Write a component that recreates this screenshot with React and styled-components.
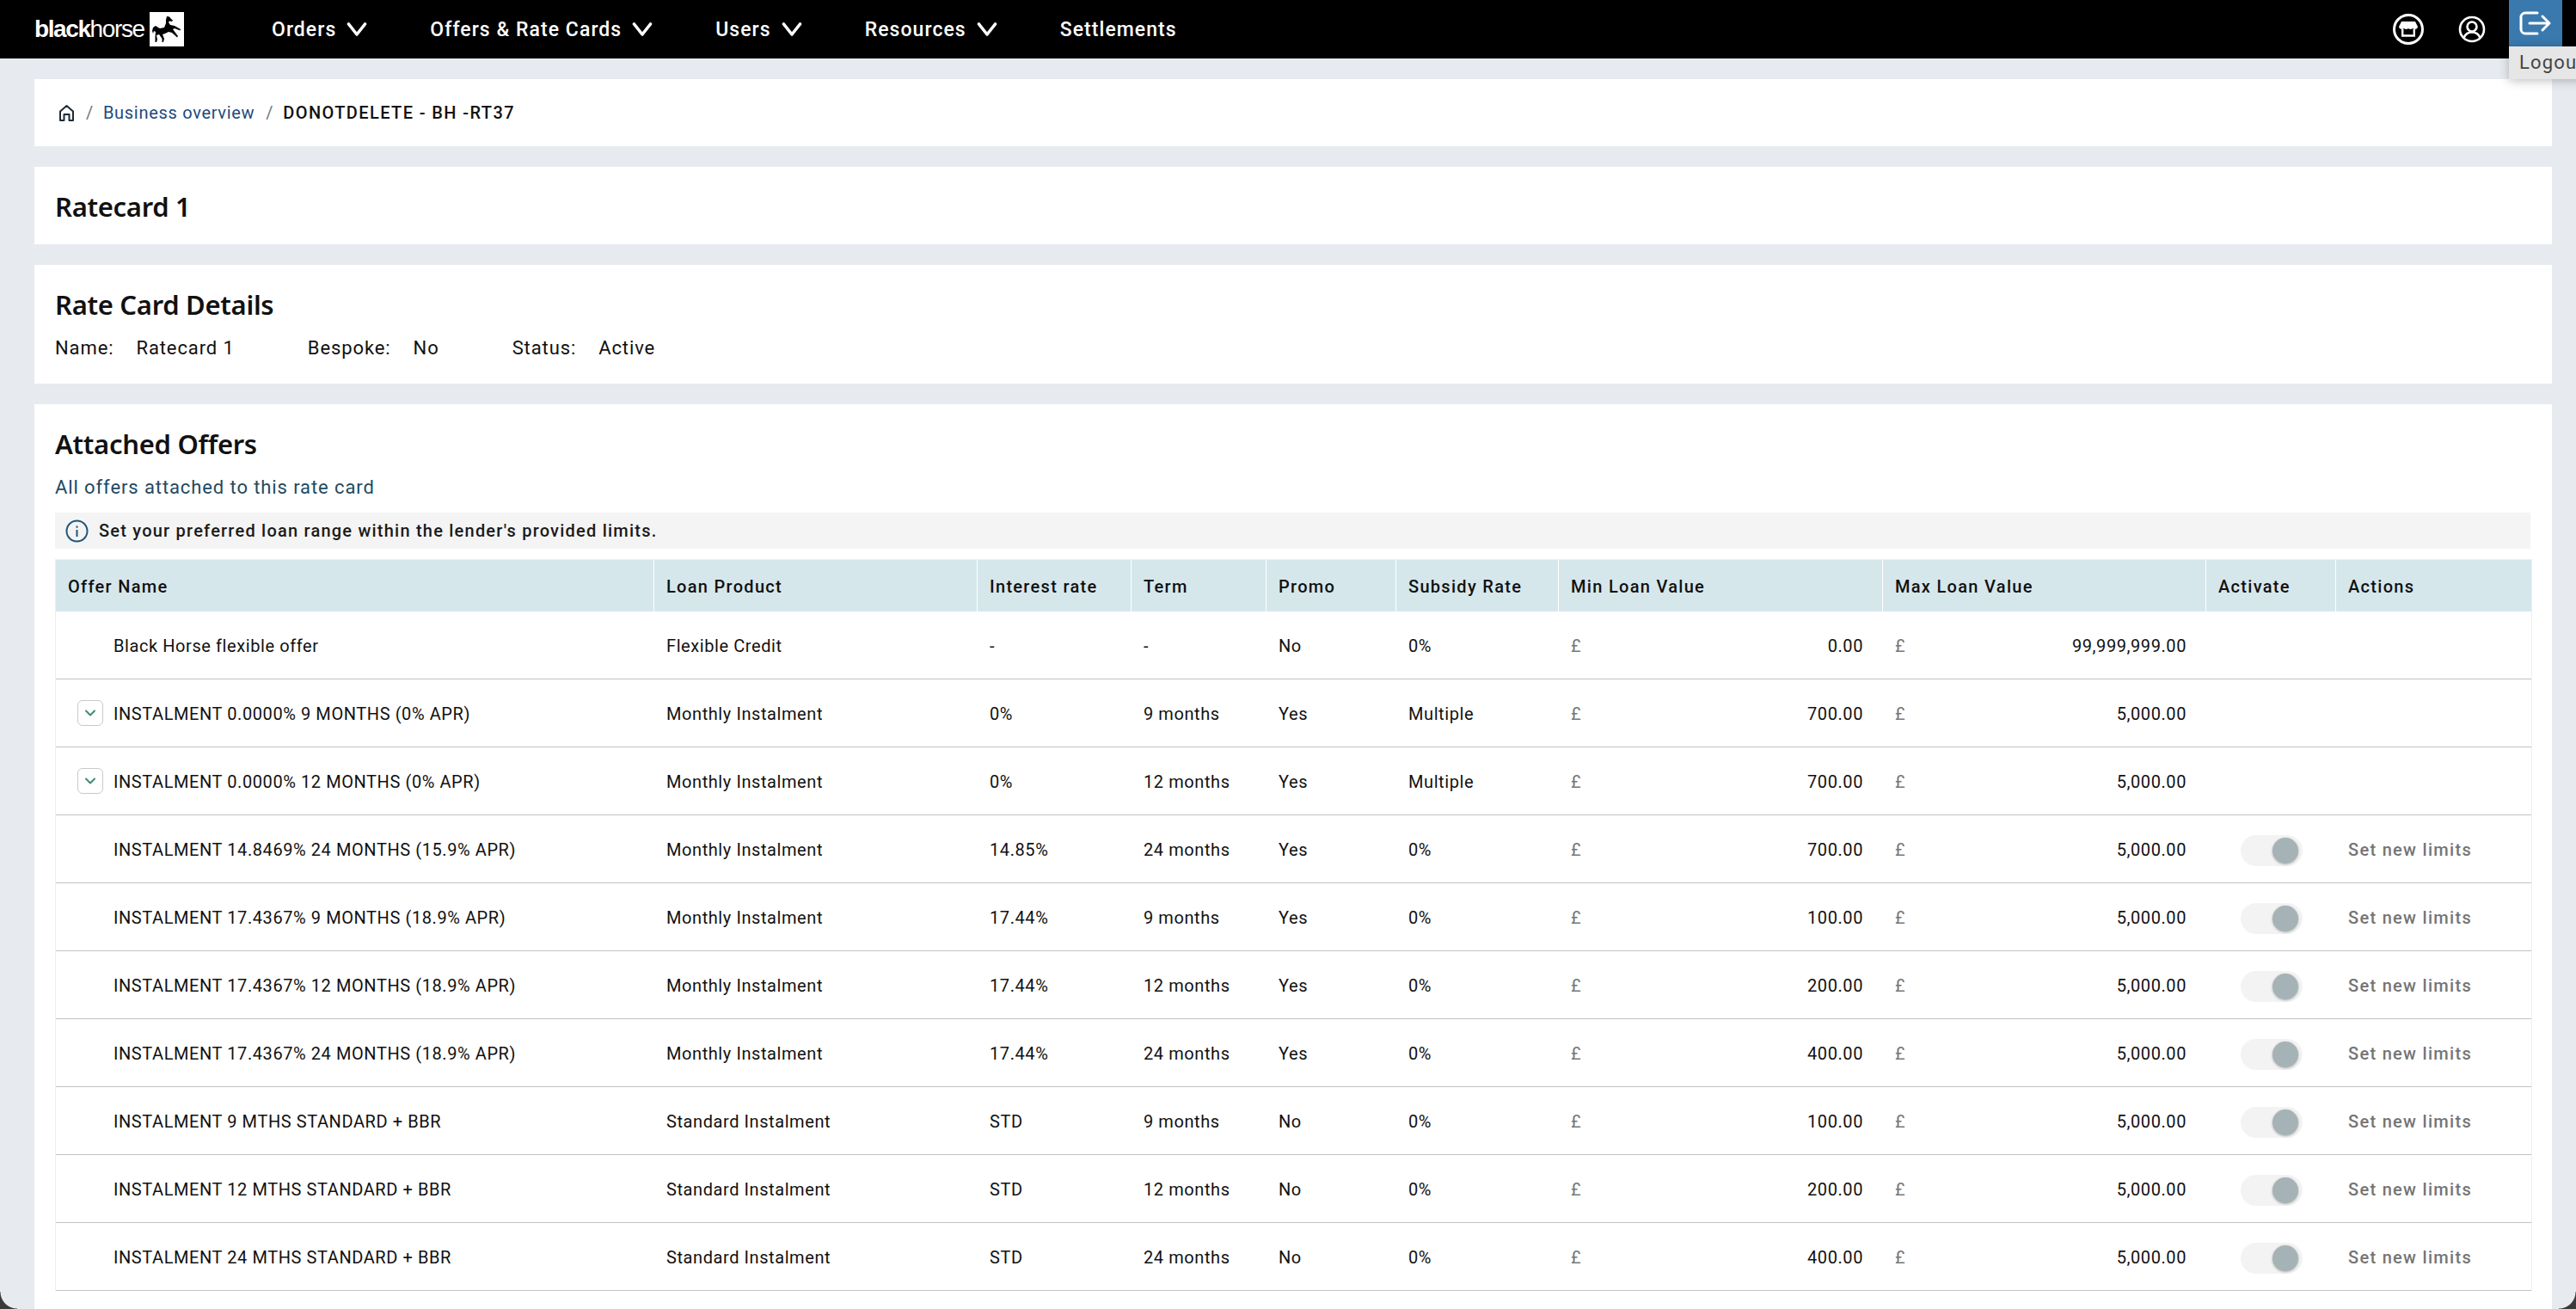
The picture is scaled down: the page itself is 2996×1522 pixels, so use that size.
import React from "react";
import styled, { createGlobalStyle } from "styled-components";

const GlobalStyle = createGlobalStyle`
  html, body {
    margin: 0;
    height: 100%;
    overflow: hidden;
    background: #e7eaef;
    font-family: Roboto, "Liberation Sans", sans-serif;
    color: #111;
  }
  * { box-sizing: border-box; }
`;

const offers = [
  { name: "Black Horse flexible offer", product: "Flexible Credit", rate: "-", term: "-", promo: "No", subsidy: "0%", min: "0.00", max: "99,999,999.00" },
  { name: "INSTALMENT 0.0000% 9 MONTHS (0% APR)", product: "Monthly Instalment", rate: "0%", term: "9 months", promo: "Yes", subsidy: "Multiple", min: "700.00", max: "5,000.00", expand: true },
  { name: "INSTALMENT 0.0000% 12 MONTHS (0% APR)", product: "Monthly Instalment", rate: "0%", term: "12 months", promo: "Yes", subsidy: "Multiple", min: "700.00", max: "5,000.00", expand: true },
  { name: "INSTALMENT 14.8469% 24 MONTHS (15.9% APR)", product: "Monthly Instalment", rate: "14.85%", term: "24 months", promo: "Yes", subsidy: "0%", min: "700.00", max: "5,000.00", actions: true },
  { name: "INSTALMENT 17.4367% 9 MONTHS (18.9% APR)", product: "Monthly Instalment", rate: "17.44%", term: "9 months", promo: "Yes", subsidy: "0%", min: "100.00", max: "5,000.00", actions: true },
  { name: "INSTALMENT 17.4367% 12 MONTHS (18.9% APR)", product: "Monthly Instalment", rate: "17.44%", term: "12 months", promo: "Yes", subsidy: "0%", min: "200.00", max: "5,000.00", actions: true },
  { name: "INSTALMENT 17.4367% 24 MONTHS (18.9% APR)", product: "Monthly Instalment", rate: "17.44%", term: "24 months", promo: "Yes", subsidy: "0%", min: "400.00", max: "5,000.00", actions: true },
  { name: "INSTALMENT 9 MTHS STANDARD + BBR", product: "Standard Instalment", rate: "STD", term: "9 months", promo: "No", subsidy: "0%", min: "100.00", max: "5,000.00", actions: true },
  { name: "INSTALMENT 12 MTHS STANDARD + BBR", product: "Standard Instalment", rate: "STD", term: "12 months", promo: "No", subsidy: "0%", min: "200.00", max: "5,000.00", actions: true },
  { name: "INSTALMENT 24 MTHS STANDARD + BBR", product: "Standard Instalment", rate: "STD", term: "24 months", promo: "No", subsidy: "0%", min: "400.00", max: "5,000.00", actions: true },
];

const columns = [
  ["Offer Name", 696],
  ["Loan Product", 376],
  ["Interest rate", 179],
  ["Term", 157],
  ["Promo", 151],
  ["Subsidy Rate", 189],
  ["Min Loan Value", 377],
  ["Max Loan Value", 376],
  ["Activate", 151],
  ["Actions", 227],
];

const Chevron = () => (
  <svg width="24" height="18" viewBox="0 0 24 18" fill="none" stroke="#fff" strokeWidth="3.6" strokeLinecap="round" strokeLinejoin="round">
    <path d="M2.500 3L12 15l9.500-12" />
  </svg>
);

const HorseLogo = () => (
  <LogoBox>
    <svg width="40" height="40" viewBox="0 0 40 40">
      <path
        fill="#000"
        d="M20 5L23 5.500L25 8L27 9.500L26 11L23 10.500L22 12L24 15L29 16L36 20L35.500 21.500L29 19L27 20L33 28L32 29.500L26 24L22 23L18 25L15 26L17 31L16 35L14.500 35L14.500 31L11 26L8 27L9 32L8 35L6.500 35L6.500 29L7 23L5 22L4 25L3 22L4 18L7 16L10 18L12 19L17 18L19 13L19 9Z"
      />
    </svg>
  </LogoBox>
);

const ShopIcon = () => (
  <svg width="38" height="38" viewBox="0 0 38 38">
    <circle cx="19" cy="19" r="16.5" fill="none" stroke="#fff" strokeWidth="3" />
    <path fill="#fff" d="M11 10h16l3 6c0 2-2 3-3.5 3s-2.500-1-2.500-1-1 1-2.500 1-2.500-1-2.500-1-1 1-2.500 1-2.500-1-2.500-1-1 1-2.500 1S8 18 8 16z" />
    <path fill="none" stroke="#fff" strokeWidth="2.4" d="M12.200 19v7.500h13.600V19" />
  </svg>
);

const UserIcon = () => (
  <svg width="32" height="32" viewBox="0 0 32 32" fill="none" stroke="#fff" strokeWidth="2.6">
    <circle cx="16" cy="16" r="14" />
    <circle cx="16" cy="13" r="5.500" />
    <path d="M6.500 26c1.500-4 5-6.500 9.500-6.500s8 2.500 9.500 6.500" />
  </svg>
);

const LogoutIcon = () => (
  <svg width="38" height="28" viewBox="0 0 38 28" fill="none" stroke="#fff" strokeWidth="3" strokeLinecap="round" strokeLinejoin="round">
    <path d="M21 2H7a5 5 0 0 0-5 5v14a5 5 0 0 0 5 5h14" />
    <path d="M12 14h23M27 6l8 8-8 8" />
  </svg>
);

const HomeIcon = () => (
  <svg width="19" height="21" viewBox="0 0 19 21" fill="none" stroke="#1d2b36" strokeWidth="2" strokeLinejoin="round">
    <path d="M2 8.500L9.500 2 17 8.500V19h-4.500v-7h-6v7H2z" />
  </svg>
);

const InfoIcon = () => (
  <svg width="27" height="27" viewBox="0 0 27 27" fill="none" stroke="#1f5578" strokeWidth="2">
    <circle cx="13.500" cy="13.500" r="12" />
    <path d="M13.500 12v8" />
    <path d="M13.500 7.500v2.200" />
  </svg>
);

const SmallChevron = () => (
  <svg width="14" height="10" viewBox="0 0 14 10" fill="none" stroke="#3f8a78" strokeWidth="2" strokeLinecap="round" strokeLinejoin="round">
    <path d="M2 2.500l5 5 5-5" />
  </svg>
);

function NavItem({ label, menu }) {
  return (
    <NavLink>
      {label}
      {menu && <Chevron />}
    </NavLink>
  );
}

function Money({ value }) {
  return (
    <MoneyCell>
      <Pound>£</Pound>
      <span>{value}</span>
    </MoneyCell>
  );
}

function App() {
  return (
    <Page>
      <GlobalStyle />
      <TopBar>
        <Logo>
          <LogoText><b>black</b>horse</LogoText>
          <HorseLogo />
        </Logo>
        <Nav>
          <NavItem label="Orders" menu />
          <NavItem label="Offers & Rate Cards" menu />
          <NavItem label="Users" menu />
          <NavItem label="Resources" menu />
          <NavItem label="Settlements" />
        </Nav>
        <TopIcons>
          <ShopIcon />
          <UserIcon />
          <LogoutTab>
            <LogoutIcon />
            <Tooltip>Logout</Tooltip>
          </LogoutTab>
        </TopIcons>
      </TopBar>

      <Content>
        <BreadcrumbCard>
          <HomeIcon />
          <Slash>/</Slash>
          <CrumbLink>Business overview</CrumbLink>
          <Slash>/</Slash>
          <CrumbCurrent>DONOTDELETE - BH -RT37</CrumbCurrent>
        </BreadcrumbCard>

        <TitleCard>
          <Heading>Ratecard 1</Heading>
        </TitleCard>

        <DetailsCard>
          <Heading>Rate Card Details</Heading>
          <DetailRow>
            <Detail><span>Name:</span><span>Ratecard 1</span></Detail>
            <Detail><span>Bespoke:</span><span>No</span></Detail>
            <Detail><span>Status:</span><span>Active</span></Detail>
          </DetailRow>
        </DetailsCard>

        <OffersCard>
          <Heading>Attached Offers</Heading>
          <SubHeading>All offers attached to this rate card</SubHeading>
          <InfoBar>
            <InfoIcon />
            Set your preferred loan range within the lender's provided limits.
          </InfoBar>
          <Table>
            <colgroup>
              {columns.map(([label, width]) => (
                <col key={label} width={width} />
              ))}
            </colgroup>
            <thead>
              <tr>
                {columns.map(([label]) => (
                  <Th key={label}>{label}</Th>
                ))}
              </tr>
            </thead>
            <tbody>
              {offers.map((offer) => (
                <tr key={offer.name}>
                  <Td>
                    <NameCell>
                      {offer.expand && (
                        <ExpandButton>
                          <SmallChevron />
                        </ExpandButton>
                      )}
                      {offer.name}
                    </NameCell>
                  </Td>
                  <Td>{offer.product}</Td>
                  <Td>{offer.rate}</Td>
                  <Td>{offer.term}</Td>
                  <Td>{offer.promo}</Td>
                  <Td>{offer.subsidy}</Td>
                  <Td><Money value={offer.min} /></Td>
                  <Td><Money value={offer.max} /></Td>
                  <Td>
                    {offer.actions && (
                      <Toggle>
                        <Thumb />
                      </Toggle>
                    )}
                  </Td>
                  <Td>{offer.actions && <LimitsLink>Set new limits</LimitsLink>}</Td>
                </tr>
              ))}
            </tbody>
          </Table>
        </OffersCard>
      </Content>
      <CornerLeft />
      <CornerRight />
    </Page>
  );
}

const Page = styled.div`
  height: 1522px;
  overflow: hidden;
  position: relative;
`;

const TopBar = styled.header`
  height: 68px;
  background: #000;
  display: flex;
  align-items: center;
  padding-left: 40px;
`;

const Logo = styled.div`
  display: flex;
  align-items: center;
  gap: 6px;
  width: 276px;
`;

const LogoText = styled.span`
  font-family: "Liberation Sans", Arial, sans-serif;
  font-size: 28px;
  letter-spacing: -1.4px;
  color: #fff;
  b { font-weight: 700; }
`;

const LogoBox = styled.div`
  width: 40px;
  height: 40px;
  background: #fff;
  display: flex;
`;

const Nav = styled.nav`
  display: flex;
  align-items: center;
  gap: 73px;
`;

const NavLink = styled.a`
  display: flex;
  align-items: center;
  gap: 12px;
  color: #fff;
  font-size: 23px;
  font-weight: 500;
  letter-spacing: 1.05px;
`;

const TopIcons = styled.div`
  margin-left: auto;
  margin-right: 16px;
  display: flex;
  align-items: center;
  align-self: stretch;
  gap: 39px;
`;

const LogoutTab = styled.div`
  position: relative;
  align-self: flex-start;
  width: 62px;
  height: 54px;
  margin-left: -12px;
  background: #3a79ad;
  display: flex;
  align-items: center;
  justify-content: center;
`;

const Tooltip = styled.div`
  position: absolute;
  top: 54px;
  left: 0;
  width: 90px;
  height: 38px;
  padding-left: 12px;
  background: #e6e6e6;
  color: #444;
  font-size: 22px;
  letter-spacing: 1.2px;
  line-height: 38px;
  box-shadow: 0 2px 12px rgba(0, 0, 0, 0.25);
`;

const Content = styled.main`
  display: flex;
  flex-direction: column;
  gap: 24px;
  padding: 24px 28px 0 40px;
`;

const Card = styled.section`
  background: #fff;
  padding-left: 24px;
  padding-right: 25px;
`;

const BreadcrumbCard = styled(Card)`
  height: 78px;
  display: flex;
  align-items: center;
  padding-left: 28px;
  font-size: 20px;
  letter-spacing: 0.7px;
`;

const Slash = styled.span`
  color: #777;
  margin: 0 11px 0 13px;
`;

const CrumbLink = styled.a`
  color: #1d4a7d;
`;

const CrumbCurrent = styled.span`
  font-weight: 500;
  letter-spacing: 1.4px;
  color: #111;
`;

const TitleCard = styled(Card)`
  height: 90px;
  display: flex;
  align-items: center;
  padding-top: 2px;
`;

const Heading = styled.h2`
  margin: 0;
  font-family: "Noto Sans", sans-serif;
  font-size: 31px;
  font-weight: 600;
  letter-spacing: -0.3px;
  line-height: 36px;
  color: #111;
`;

const DetailsCard = styled(Card)`
  height: 138px;
  padding-top: 28px;
`;

const DetailRow = styled.div`
  display: flex;
  gap: 85px;
  margin-top: 18px;
  font-size: 22px;
  line-height: 30px;
  letter-spacing: 0.9px;
`;

const Detail = styled.div`
  display: flex;
  gap: 26px;
`;

const OffersCard = styled(Card)`
  padding-top: 28px;
  padding-bottom: 60px;
`;

const SubHeading = styled.p`
  margin: 18px 0 0;
  font-size: 22px;
  line-height: 30px;
  letter-spacing: 0.9px;
  color: #234a60;
`;

const InfoBar = styled.div`
  margin-top: 14px;
  height: 42px;
  background: #f4f4f4;
  display: flex;
  align-items: center;
  gap: 12px;
  padding-left: 12px;
  font-size: 20px;
  font-weight: 500;
  letter-spacing: 1.22px;
  color: #1a1a1a;
`;

const Table = styled.table`
  margin-top: 12px;
  width: 2879px;
  table-layout: fixed;
  border-collapse: separate;
  border-spacing: 0;
  border-left: 1px solid #eeeeee;
  border-right: 1px solid #eeeeee;
  border-top: 1px solid #eef1f2;
`;

const Th = styled.th`
  height: 60px;
  padding: 2px 12px 0 14px;
  background: #d6e7ec;
  border-right: 1px solid #fff;
  text-align: left;
  font-size: 20px;
  font-weight: 500;
  letter-spacing: 1.3px;
  color: #111;
  &:last-child { border-right: 0; }
`;

const Td = styled.td`
  height: 79px;
  padding: 1px 12px 0 14px;
  border-bottom: 1px solid #c2c2c2;
  font-size: 20px;
  letter-spacing: 0.58px;
  color: #111;
  white-space: nowrap;
`;

const NameCell = styled.div`
  display: flex;
  align-items: center;
  min-height: 30px;
  padding-left: 53px;
  position: relative;
`;

const ExpandButton = styled.span`
  position: absolute;
  left: 11px;
  top: -1px;
  width: 30px;
  height: 30px;
  border: 1px solid #c9c9c9;
  border-radius: 6px;
  background: #fff;
  display: flex;
  align-items: center;
  justify-content: center;
`;

const MoneyCell = styled.div`
  display: flex;
  justify-content: space-between;
  padding-right: 11px;
`;

const Pound = styled.span`
  color: #777;
`;

const Toggle = styled.div`
  position: relative;
  width: 72px;
  height: 36px;
  margin: 3px 0 0 26px;
  border-radius: 18px;
  background: #f3f3f3;
`;

const Thumb = styled.div`
  position: absolute;
  right: 5px;
  top: 3px;
  width: 30px;
  height: 30px;
  border-radius: 50%;
  background: #a6b3b6;
  box-shadow: 0 1px 3px rgba(0, 0, 0, 0.3);
`;

const LimitsLink = styled.a`
  color: #757575;
  font-weight: 500;
  letter-spacing: 1.3px;
`;

const CornerLeft = styled.div`
  position: absolute;
  left: 0;
  bottom: 0;
  width: 20px;
  height: 20px;
  background: radial-gradient(circle at 100% 0, transparent 19px, #3a3a3a 20px);
`;

const CornerRight = styled(CornerLeft)`
  left: auto;
  right: 0;
  background: radial-gradient(circle at 0 0, transparent 19px, #3a3a3a 20px);
`;

export default App;
